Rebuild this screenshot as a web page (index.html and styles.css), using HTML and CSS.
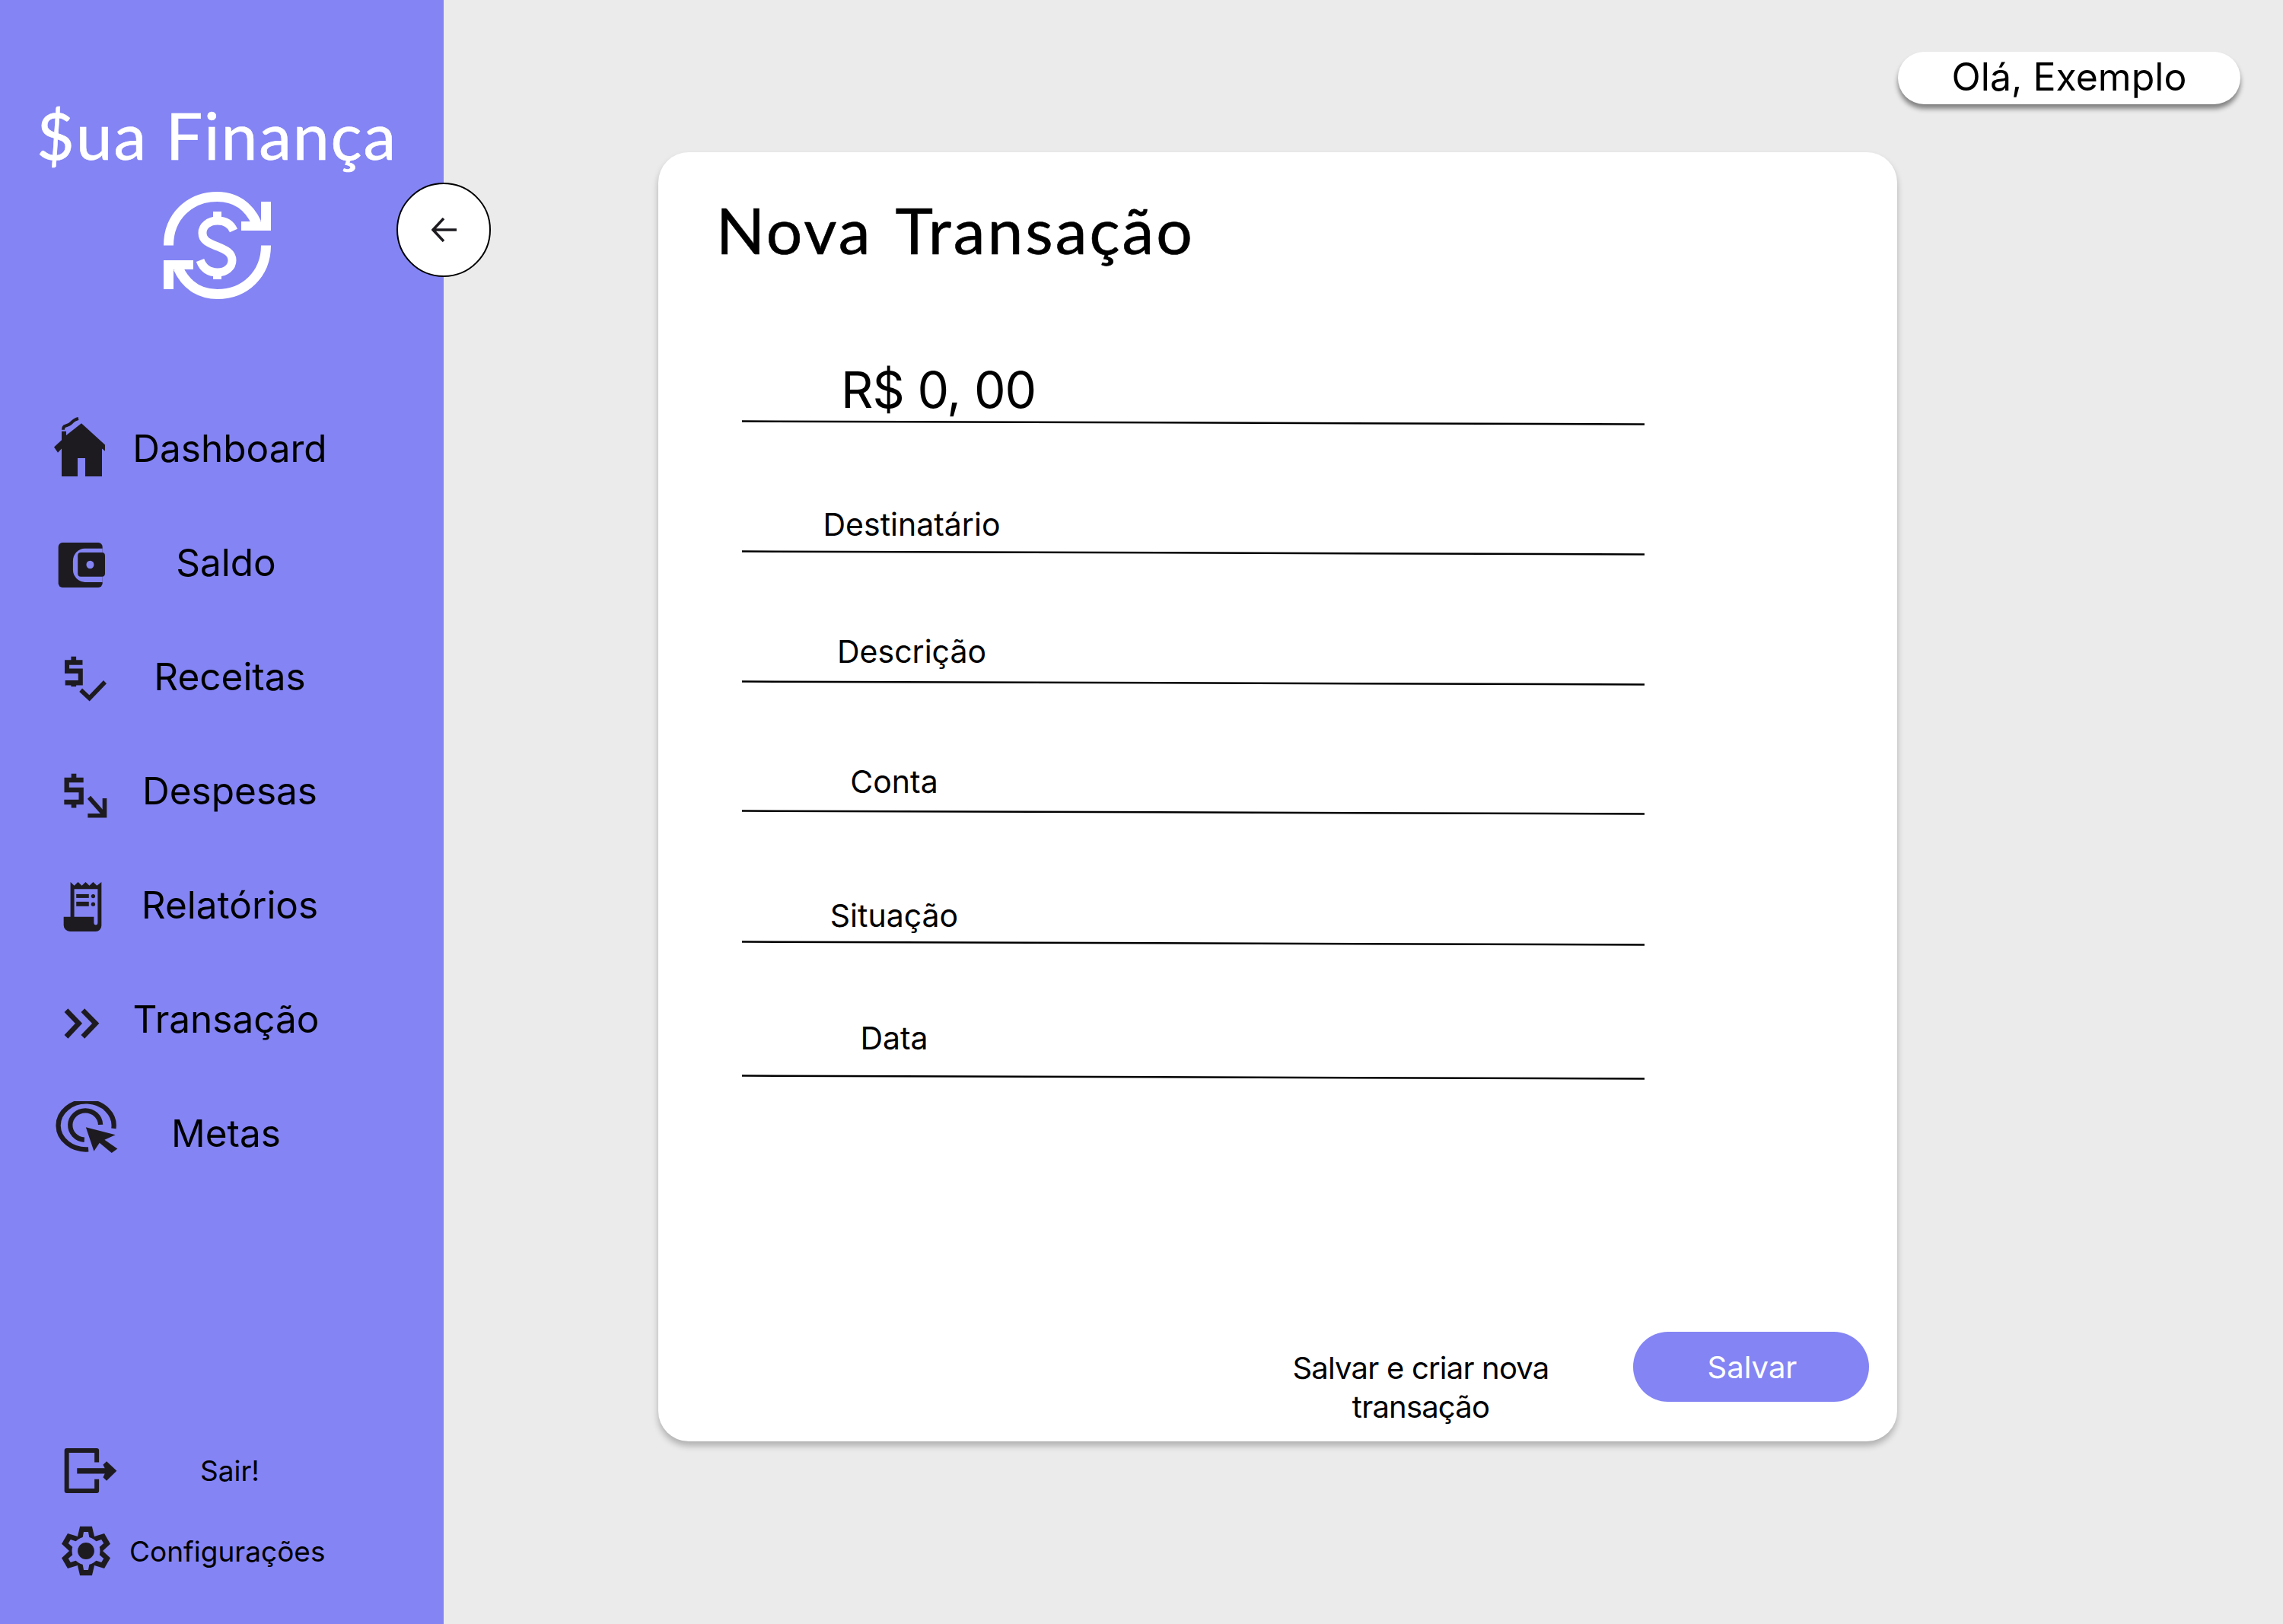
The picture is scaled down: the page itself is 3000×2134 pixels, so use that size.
FILE: index.html
```html
<!DOCTYPE html>
<html lang="pt-BR">
	<head>
		<meta charset="UTF-8" />
		<meta name="viewport" content="width=device-width, initial-scale=1.0" />
		<title>Nova Transação</title>
		<link rel="stylesheet" href="styles.css">
	</head>
	<body>
		<aside class="sidebar">
			<div class="logo">$ua Finança</div>
			<svg class="logo-icon" viewBox="0 0 141 141">
				<g fill="#fff">
					<path d="M6.5 70.5 C6.5 33 34 6.500 70.500 6.500 C94 6.500 112 19 122 41" fill="none" stroke="#fff" stroke-width="13" />
					<polygon points="128,13 141,13 141,51 102,51 102,39 128,39" />
					<g transform="rotate(180 70.5 70.5)">
						<path d="M6.5 70.5 C6.500 33 34 6.500 70.500 6.500 C94 6.500 112 19 122 41" fill="none" stroke="#fff" stroke-width="13" />
						<polygon points="128,13 141,13 141,51 102,51 102,39 128,39" />
					</g>
					<path d="M92 51 C88 42 80 38 71 38 C59 38 51 45 51 54 C51 65 61 68 71 72 C81 76 90 80 90 90 C90 99 82 106 71 106 C60 106 52 101 48 90" fill="none" stroke="#fff" stroke-width="11" />
					<rect x="65" y="26" width="11" height="12" />
					<rect x="65" y="104" width="11" height="11" />
				</g>
			</svg>

			<nav class="menu">
				<a class="menu-item">
					<span class="menu-icon">
						<svg class="ico-house" viewBox="0 0 70 76" preserveAspectRatio="none">
							<path d="M37 8 L68 35 V43 L64 40 V75 H42 V52 H32 V75 H11 V40 L6 45 L1 38 L11 29 V18 H17 V23 Z" />
							<path d="M13 16 C13 9 19 12 23 8 C26 5 28 3 33 2" fill="none" stroke="#1e1b20" stroke-width="4" />
						</svg>
					</span>
					<span class="menu-label">Dashboard</span>
				</a>
				<a class="menu-item">
					<span class="menu-icon">
						<svg class="ico-wallet" viewBox="108 538 190 170" preserveAspectRatio="none">
							<rect x="110" y="538" width="175" height="167" rx="16" />
							<path d="M285 560 H215 A47 47 0 0 0 168 607 V638 A47 47 0 0 0 215 685 H285 Z" fill="#8484f4" />
							<rect x="187" y="575" width="108" height="90" rx="12" />
							<circle cx="236" cy="620" r="15" fill="#8484f4" />
						</svg>
					</span>
					<span class="menu-label menu-label--short">Saldo</span>
				</a>
				<a class="menu-item">
					<span class="menu-icon">
						<svg class="ico-check" viewBox="132 956 170 170" preserveAspectRatio="none">
							<g fill="none" stroke="#1e1b20">
								<path d="M205 980 H144 V1012 H197 V1056 H137" stroke-width="18" />
								<path d="M198 1083 L232 1113 L293 1053" stroke-width="17" />
							</g>
							<rect x="160" y="958" width="20" height="16" />
							<rect x="160" y="1055" width="20" height="15" />
						</svg>
					</span>
					<span class="menu-label">Receitas</span>
				</a>
				<a class="menu-item">
					<span class="menu-icon">
						<svg class="ico-down" viewBox="128 1386 174 174" preserveAspectRatio="none">
							<path d="M208 1412 H142 V1450 H199 V1496 H132" fill="none" stroke="#1e1b20" stroke-width="19" />
							<rect x="160" y="1388" width="20" height="16" />
							<rect x="160" y="1500" width="20" height="18" />
							<path d="M230 1478 L292 1546" fill="none" stroke="#1e1b20" stroke-width="17" />
							<polygon points="283,1482 300,1482 300,1556 225,1556 225,1540 283,1540" />
						</svg>
					</span>
					<span class="menu-label">Despesas</span>
				</a>
				<a class="menu-item">
					<span class="menu-icon">
						<svg class="ico-report" viewBox="68 50 154 200">
							<path d="M97 52 L112 66 L127 52 L142 66 L157 52 L172 66 L187 52 L202 66 L220 52 V225 A23 23 0 0 1 197 248 H95 A25 25 0 0 1 70 223 V190 H97 Z" />
							<path d="M112 80 H205 V215 A7.500 7.500 0 0 1 190 215 V190 H112 Z" fill="#8484f4" />
							<rect x="120" y="100" width="50" height="15" />
							<rect x="120" y="130" width="50" height="18" />
							<circle cx="187" cy="108" r="8" />
							<circle cx="187" cy="140" r="8" />
						</svg>
					</span>
					<span class="menu-label">Relatórios</span>
				</a>
				<a class="menu-item">
					<span class="menu-icon">
						<svg class="ico-chevrons" viewBox="125 130 145 122">
							<path d="M137 140 L187 192 L137 245 M203 140 L254 192 L203 245" fill="none" stroke="#1e1b20" stroke-width="20" />
						</svg>
					</span>
					<span class="menu-label menu-label--short">Transação</span>
				</a>
				<a class="menu-item">
					<span class="menu-icon">
						<svg class="ico-target" viewBox="95 498 250 206">
							<g fill="none" stroke="#1e1b20" stroke-width="19">
								<path d="M328 605 A110 95 0 1 0 228 688" />
								<path d="M276 590 A60 58 0 1 0 212 650" />
							</g>
							<polygon points="218,600 335,630 292,650 343,685 320,702 272,662 250,695" />
						</svg>
					</span>
					<span class="menu-label menu-label--short">Metas</span>
				</a>
			</nav>

			<div class="sidebar-foot">
				<a class="foot-item">
					<span class="menu-icon">
						<svg class="ico-exit" viewBox="133 130 211 182">
							<path d="M263 188 V141 H144 V301 H263 V255" fill="none" stroke="#1e1b20" stroke-width="18" stroke-linejoin="round" />
							<rect x="185" y="211" width="120" height="22" />
							<polygon points="302,184 342,222 302,261 288,247 300,222 288,198" />
						</svg>
					</span>
					<span class="foot-label">Sair!</span>
				</a>
				<a class="foot-item">
					<span class="menu-icon">
						<svg class="ico-gear" viewBox="-100 -100 200 200">
							<g>
								<polygon id="tooth" points="-24,-98 24,-98 33,-60 33,60 24,98 -24,98 -33,60 -33,-60" />
								<use href="#tooth" transform="rotate(60)" />
								<use href="#tooth" transform="rotate(120)" />
							</g>
							<g fill="#8484f4">
								<polygon id="gap" points="-9,-76 9,-76 14,-50 14,50 9,76 -9,76 -14,50 -14,-50" />
								<use href="#gap" transform="rotate(60)" />
								<use href="#gap" transform="rotate(120)" />
								<circle r="56" />
							</g>
							<circle r="33" />
						</svg>
					</span>
					<span class="foot-label foot-label--long">Configurações</span>
				</a>
			</div>

			<button class="toggle">
				<svg viewBox="0 0 33 32" width="33" height="32">
					<path d="M33 16 H3 M16 1 L2 16 L16 31" fill="none" stroke="#1e1b20" stroke-width="3.500" />
				</svg>
			</button>
		</aside>

		<main class="content">
			<div class="topbar">
				<div class="greeting">Olá, Exemplo</div>
			</div>

			<section class="card">
				<h1 class="card-title">Nova Transação</h1>

				<form class="form">
					<div class="field field--amount">
						<span class="field-value">R$ 0, 00</span>
						<svg class="rule" viewBox="0 0 1186 7"><line x1="0" y1="1.500" x2="1186" y2="5.500" /></svg>
					</div>
					<div class="field field--dest">
						<span class="field-label field-label--wide">Destinatário</span>
						<svg class="rule" viewBox="0 0 1186 7"><line x1="0" y1="1.500" x2="1186" y2="5.500" /></svg>
					</div>
					<div class="field field--desc">
						<span class="field-label field-label--wide">Descrição</span>
						<svg class="rule" viewBox="0 0 1186 7"><line x1="0" y1="1.500" x2="1186" y2="5.500" /></svg>
					</div>
					<div class="field field--conta">
						<span class="field-label">Conta</span>
						<svg class="rule" viewBox="0 0 1186 7"><line x1="0" y1="1.500" x2="1186" y2="5.500" /></svg>
					</div>
					<div class="field field--situacao">
						<span class="field-label">Situação</span>
						<svg class="rule" viewBox="0 0 1186 7"><line x1="0" y1="1.500" x2="1186" y2="5.500" /></svg>
					</div>
					<div class="field field--data">
						<span class="field-label">Data</span>
						<svg class="rule" viewBox="0 0 1186 7"><line x1="0" y1="1.500" x2="1186" y2="5.500" /></svg>
					</div>
				</form>

				<div class="card-actions">
					<div class="save-new">Salvar e criar nova transação</div>
					<div class="save">Salvar</div>
				</div>
			</section>
		</main>
	</body>
</html>
```

FILE: styles.css
```css
html,
body {
	width: 100%;
	height: 100%;
}

body {
	margin: 0;
	display: flex;
	height: 2134px;
	overflow: hidden;
	color: #000;
	background-color: #ebebeb;
	font-family: Inter, 'Liberation Sans', sans-serif;
}

svg {
	display: block;
	fill: #1e1b20;
}

/* Barra lateral */
.sidebar {
	position: relative;
	flex: 0 0 583px;
	height: 2134px;
	box-sizing: border-box;
	padding-top: 125px;
	display: flex;
	flex-direction: column;
	background-color: #8484f4;
}

.logo {
	margin-left: 48px;
	font-family: Lato, sans-serif;
	font-size: 86px;
	line-height: 104px;
	letter-spacing: 1.800px;
	-webkit-text-stroke: 0.6px #fff;
	color: #fff;
	white-space: nowrap;
}

.logo-icon {
	width: 141px;
	height: 141px;
	margin: 23px 0 0 215px;
}

.menu {
	margin-top: 121px;
	display: flex;
	flex-direction: column;
}

.menu-item {
	display: flex;
	align-items: center;
	height: 150px;
}

.menu-icon {
	flex: 0 0 170px;
	height: 90px;
	display: flex;
	align-items: center;
}

.menu-label {
	width: 264px;
	font-size: 49.500px;
	text-align: center;
}

.menu-label--short {
	width: 254px;
}

.sidebar-foot {
	margin-top: auto;
	padding-bottom: 51px;
	display: flex;
	flex-direction: column;
	gap: 16px;
}

.foot-item {
	display: flex;
	align-items: center;
	height: 90px;
}

.foot-label {
	width: 264px;
	font-size: 37px;
	text-align: center;
}

.foot-label--long {
	width: 250px;
}

/* margem no topo compensa o centro de cada ícone em relação à linha */
.ico-house { width: 70px; height: 79px; margin: -4px 0 0 70px; }
.ico-wallet { width: 63px; height: 60px; margin: 8px 0 0 76px; }
.ico-check { width: 57px; height: 60px; margin: 6px 0 0 84px; }
.ico-down { width: 58px; height: 60px; margin: 14px 0 0 83px; }
.ico-report { width: 51px; height: 67px; margin: 4px 0 0 83px; }
.ico-chevrons { width: 48px; height: 41px; margin: 10px 0 0 83px; }
.ico-target { width: 83px; height: 69px; margin: -16px 0 0 72px; }
.ico-exit { width: 70px; height: 61px; margin-left: 84px; }
.ico-gear { width: 66px; height: 66px; margin-left: 80px; }

.toggle {
	position: absolute;
	top: 240px;
	right: -62px;
	width: 124px;
	height: 124px;
	padding: 0;
	display: flex;
	align-items: center;
	justify-content: center;
	box-sizing: border-box;
	border: 2px solid #000;
	border-radius: 50%;
	background-color: #fff;
}

/* Conteúdo */
.content {
	flex: 1;
	padding-top: 68px;
}

.topbar {
	display: flex;
	justify-content: flex-end;
	height: 69px;
	margin-bottom: 63px;
	padding-right: 56px;
}

.greeting {
	width: 450px;
	height: 69px;
	line-height: 66px;
	font-size: 50px;
	text-align: center;
	border-radius: 35px;
	background-color: #fff;
	box-shadow: 0 6px 6px rgba(0, 0, 0, 0.45);
}

.card {
	width: 1628px;
	height: 1694px;
	margin-left: 282px;
	box-sizing: border-box;
	padding-top: 52px;
	display: flex;
	flex-direction: column;
	border-radius: 40px;
	background-color: #fff;
	box-shadow: 0 6px 8px rgba(0, 0, 0, 0.25);
}

.card-title {
	margin: 0 0 0 76px;
	font-family: Lato, sans-serif;
	font-size: 84px;
	font-weight: 400;
	line-height: 100px;
	letter-spacing: 3px;
	word-spacing: 8px;
	-webkit-text-stroke: 0.6px #000;
}

.form {
	margin: 0 0 0 110px;
	width: 1186px;
	flex: 1;
	display: grid;
	grid-template-rows: 207px 171px 171px 170px 172px 176px;
	align-content: start;
}

.field {
	display: flex;
	flex-direction: column;
	justify-content: flex-end;
}

.rule {
	width: 1186px;
	height: 7px;
	flex: none;
}

.rule line {
	stroke: #000;
	stroke-width: 2.500;
}

.field-value {
	margin: 0 0 4px 130px;
	font-size: 66px;
	line-height: 72px;
	letter-spacing: -1px;
}

.field-label {
	width: 400px;
	font-size: 41px;
	line-height: 48px;
	text-align: center;
}

.field-label--wide {
	width: 446px;
}

.field--dest .field-label { margin-bottom: 10px; }
.field--desc .field-label { margin-bottom: 14px; }
.field--conta .field-label { margin-bottom: 13px; }
.field--situacao .field-label { margin-bottom: 9px; }
.field--data .field-label { margin-bottom: 24px; }

.card-actions {
	height: 144px;
	display: flex;
	justify-content: flex-end;
	padding-right: 37px;
	gap: 89px;
}

.save-new {
	width: 380px;
	height: 102px;
	margin-top: 22px;
	font-size: 40px;
	line-height: 51px;
	letter-spacing: -0.800px;
	text-align: center;
}

.save {
	width: 307px;
	height: 92px;
	padding-left: 3px;
	line-height: 93px;
	font-size: 40px;
	text-align: center;
	color: #fff;
	border-radius: 46px;
	background-color: #8484f4;
}
```
